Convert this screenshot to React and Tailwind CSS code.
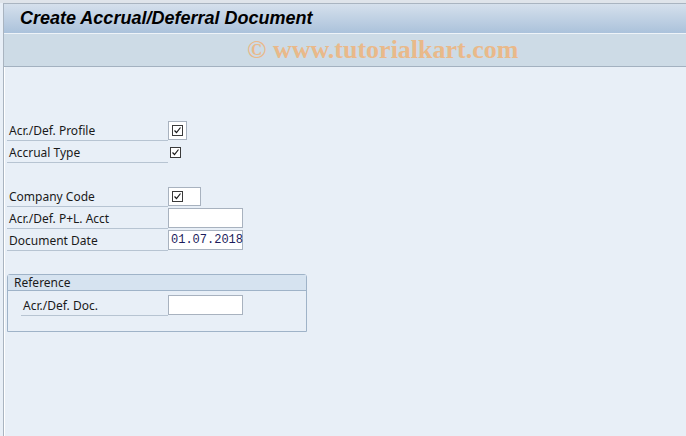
import React from "react";

function CheckIcon() {
  return (
    <svg width="11" height="11" viewBox="0 0 11 11" className="block">
      <rect x="0.5" y="0.5" width="10" height="10" fill="#ffffff" stroke="#3a3a3a" strokeWidth="1" />
      <path d="M2.5 5.5 L4.5 7.5 L8.5 2.5" fill="none" stroke="#1a1a1a" strokeWidth="1.2" />
    </svg>
  );
}

function Row({ label, children, labelW = "w-[161px]", pl = "pl-[2px]" }) {
  return (
    <div className="flex h-[22px] items-end">
      <div className={`${labelW} h-[22px] flex items-center border-b border-[#b7c4d2] ${pl} leading-none`}>
        <span className="pt-[2px]">{label}</span>
      </div>
      <div className="h-[22px] flex items-center">{children}</div>
    </div>
  );
}

function Input({ w = "w-[75px]", children }) {
  return (
    <div className={`${w} h-[20px] bg-white border border-[#a8b2bf] flex items-center px-[2px] font-['Liberation_Mono',monospace] text-[12px] text-[#1c1c5c]`}>
      {children}
    </div>
  );
}

export default function App() {
  return (
    <div className="w-[686px] h-[436px] overflow-hidden bg-[#e8eff7] font-['Noto_Sans',sans-serif] text-[12px] text-[#1a1a1a] flex flex-col">
      <div className="h-[3px] bg-[#dfe4ea] shrink-0" />
      <div className="flex flex-1 min-h-0">
        <div className="w-[3px] bg-[#e8eff7] shrink-0" />
        <div className="flex-1 flex flex-col border-l border-[#a9b4c0] border-t">
          <div className="h-[30px] shrink-0 bg-gradient-to-b from-[#d5e0ec] to-[#abc2db] flex items-center pl-[16px] border-b border-[#eef3f8]">
            <span className="font-['Liberation_Sans',sans-serif] italic font-bold text-[18px] text-black">
              Create Accrual/Deferral Document
            </span>
          </div>
          <div className="h-[33px] shrink-0 bg-[#cddbe6] border-b border-[#a3b1c0] flex items-center pl-[243px]">
            <span className="font-['Liberation_Serif',serif] font-bold text-[26px] text-[#e9b98a] leading-none">
              © www.tutorialkart.com
            </span>
          </div>
          <div className="flex-1 pl-[2px] pt-[52px] border-l border-[#ffffff]">
            <Row label="Acr./Def. Profile">
              <div className="w-[19px] h-[19px] bg-white border border-[#a8b2bf] flex items-center justify-center">
                <CheckIcon />
              </div>
            </Row>
            <Row label="Accrual Type">
              <div className="w-[19px] h-[19px] flex items-center pl-[2px]">
                <CheckIcon />
              </div>
            </Row>
            <div className="h-[22px]" />
            <Row label="Company Code">
              <div className="w-[33px] h-[19px] bg-white border border-[#a8b2bf] flex items-center pl-[3px]">
                <CheckIcon />
              </div>
            </Row>
            <Row label="Acr./Def. P+L. Acct">
              <Input />
            </Row>
            <Row label="Document Date">
              <Input>01.07.2018</Input>
            </Row>
            <div className="mt-[23px] w-[300px] h-[58px] border border-[#9fb3c8] rounded-t-[3px] flex flex-col">
              <div className="h-[16px] bg-[#d6e3f0] border-b border-[#9fb3c8] flex items-center pl-[6px] leading-none">
                Reference
              </div>
              <div className="pl-[13px] pt-[3px]">
                <Row label="Acr./Def. Doc." labelW="w-[147px]">
                  <Input />
                </Row>
              </div>
            </div>
          </div>
        </div>
      </div>
    </div>
  );
}
